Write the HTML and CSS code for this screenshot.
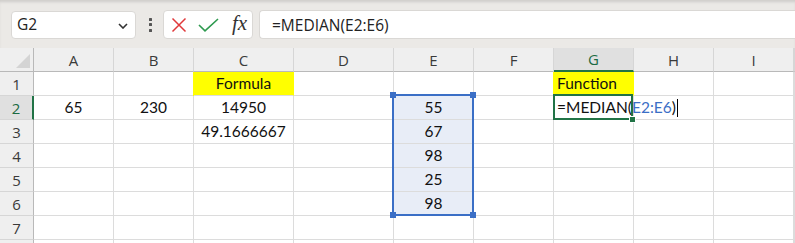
FILE: index.html
```html
<!DOCTYPE html>
<html>
<head>
<meta charset="utf-8">
<link rel="stylesheet" href="styles.css">
</head>
<body>
<div class="app">
  <div class="fbar">
    <div class="namebox">
      <span class="nb-text">G2</span>
      <svg class="chev" width="10" height="6" viewBox="0 0 10 6"><path d="M1 1 L5 5 L9 1" fill="none" stroke="#333" stroke-width="1.6"/></svg>
    </div>
    <div class="dots"><i></i><i></i><i></i></div>
    <div class="actions">
      <svg class="ic-x" width="16" height="16" viewBox="0 0 16 16"><path d="M1.5 1.5 L14.5 14.5 M14.5 1.5 L1.5 14.5" stroke="#e0393b" stroke-width="1.5" fill="none"/></svg>
      <svg class="ic-ok" width="21" height="14" viewBox="0 0 21 14"><path d="M1 7 L7 12.8 L20 1" stroke="#2e9a4f" stroke-width="1.6" fill="none"/></svg>
      <span class="fx">fx</span>
    </div>
    <div class="finput">=MEDIAN(E2:E6)</div>
  </div>
  <div class="sheet">
    <div class="corner"><svg width="16" height="16" viewBox="0 0 16 16"><path d="M15 1 L15 15 L1 15 Z" fill="#d4d4d4"/></svg></div>
    <div class="h">A</div><div class="h">B</div><div class="h">C</div><div class="h">D</div><div class="h">E</div><div class="h">F</div><div class="h sel">G</div><div class="h">H</div><div class="h">I</div><div class="h"></div>

    <div class="r">1</div>
    <div class="c"></div><div class="c"></div><div class="c y">Formula</div><div class="c"></div><div class="c"></div><div class="c"></div><div class="c y l">Function</div><div class="c"></div><div class="c"></div><div class="c"></div>

    <div class="r sel">2</div>
    <div class="c">65</div><div class="c">230</div><div class="c">14950</div><div class="c"></div>
    <div class="c e anchor">55<div class="range"><span class="hd tl"></span><span class="hd tr"></span><span class="hd bl"></span><span class="hd br"></span></div></div>
    <div class="c"></div>
    <div class="c l anchor">=MEDIAN(<span class="ref">E2:E6</span>)<span class="caret"></span><div class="active"><span class="fill"></span></div></div>
    <div class="c"></div><div class="c"></div><div class="c"></div>

    <div class="r">3</div>
    <div class="c"></div><div class="c"></div><div class="c">49.1666667</div><div class="c"></div><div class="c e">67</div><div class="c"></div><div class="c"></div><div class="c"></div><div class="c"></div><div class="c"></div>

    <div class="r">4</div>
    <div class="c"></div><div class="c"></div><div class="c"></div><div class="c"></div><div class="c e">98</div><div class="c"></div><div class="c"></div><div class="c"></div><div class="c"></div><div class="c"></div>

    <div class="r">5</div>
    <div class="c"></div><div class="c"></div><div class="c"></div><div class="c"></div><div class="c e">25</div><div class="c"></div><div class="c"></div><div class="c"></div><div class="c"></div><div class="c"></div>

    <div class="r">6</div>
    <div class="c"></div><div class="c"></div><div class="c"></div><div class="c"></div><div class="c e">98</div><div class="c"></div><div class="c"></div><div class="c"></div><div class="c"></div><div class="c"></div>

    <div class="r">7</div>
    <div class="c"></div><div class="c"></div><div class="c"></div><div class="c"></div><div class="c"></div><div class="c"></div><div class="c"></div><div class="c"></div><div class="c"></div><div class="c"></div>

    <div class="r"></div>
    <div class="c"></div><div class="c"></div><div class="c"></div><div class="c"></div><div class="c"></div><div class="c"></div><div class="c"></div><div class="c"></div><div class="c"></div><div class="c"></div>
  </div>
</div>
</body>
</html>
```
FILE: styles.css
```css
* { box-sizing: border-box; }
html, body { margin: 0; padding: 0; }
body { width: 795px; height: 243px; overflow: hidden; background: #fff; }
.app { width: 795px; height: 243px; overflow: hidden; }

.fbar {
  height: 48px;
  display: flex;
  align-items: flex-start;
  padding-top: 10px;
  background: #ebe9e6;
  box-shadow: inset 0 3px 3px -1px rgba(0,0,0,0.12);
  font-family: "Open Sans", "Noto Sans", sans-serif;
  font-size: 15.5px;
  color: #222;
}
.namebox {
  margin-left: 11px;
  margin-top: 1px;
  width: 125px;
  height: 28px;
  background: #fff;
  border: 1px solid #dad8d5;
  border-radius: 4px;
  display: flex;
  align-items: center;
  justify-content: space-between;
  padding: 0 7px 0 5px;
}
.nb-text { line-height: 1; }
.chev { display: block; margin-top: 1px; }
.dots {
  width: 27px;
  height: 29px;
  display: flex;
  flex-direction: column;
  align-items: center;
  justify-content: center;
  gap: 2.5px;
  padding-left: 1px;
}
.dots i { display: block; width: 3px; height: 3px; background: #555; border-radius: 0.5px; }
.actions {
  width: 90px;
  height: 29px;
  background: #fff;
  border: 1px solid #dad8d5;
  border-radius: 4px;
  display: flex;
  align-items: center;
  padding-left: 7px;
}
.ic-x { display: block; }
.ic-ok { display: block; margin-left: 11px; }
.fx {
  margin-left: 13px;
  font-family: "Liberation Serif", serif;
  font-style: italic;
  font-size: 21px;
  color: #333;
  line-height: 1;
  margin-top: -2px;
}
.finput {
  flex: 1;
  margin-left: 6px;
  height: 29px;
  background: #fff;
  border: 1px solid #dad8d5;
  border-right: none;
  border-radius: 4px 0 0 4px;
  padding-left: 12px;
  display: flex;
  align-items: center;
}

.sheet {
  display: grid;
  grid-template-columns: 34px 80px 80px 100px 100px 80px 80px 80px 80px 80px 1fr;
  grid-auto-rows: 24px;
  font-family: "Lato", "Liberation Sans", sans-serif;
  font-size: 15.5px;
  color: #111;
}
.corner {
  background: #efefef;
  border-right: 1px solid #b9b9b9;
  border-bottom: 1px solid #b9b9b9;
  display: flex;
  align-items: flex-end;
  justify-content: flex-end;
  padding: 0 2px 2px 0;
}
.corner svg { display: block; }
.h, .r {
  background: #efefef;
  font-family: "Open Sans", "Noto Sans", sans-serif;
  font-size: 15px;
  color: #3a3a3a;
  display: flex;
  align-items: center;
  justify-content: center;
}
.h {
  border-right: 1px solid #d6d6d6;
  border-bottom: 1px solid #b9b9b9;
}
.r {
  border-right: 1px solid #b9b9b9;
  border-bottom: 1px solid #d6d6d6;
}
.h.sel {
  background: #e0e0e0;
  color: #1b6b43;
  border-bottom: 2px solid #217346;
}
.r.sel {
  background: #e0e0e0;
  color: #1b6b43;
  border-right: 2px solid #217346;
}

.c {
  border-right: 1px solid #dcdcdc;
  border-bottom: 1px solid #dcdcdc;
  line-height: 23px;
  text-align: center;
  white-space: nowrap;
}
.c.l { text-align: left; padding-left: 3px; }
.c.y {
  background: #ffff00;
  border-right-color: #ffff00;
  box-shadow: -1px 0 0 #ffff00;
}
.c.e { background: #e8edf7; }
.anchor { position: relative; }

.range {
  position: absolute;
  left: -2px;
  top: -2px;
  width: 82px;
  height: 122px;
  border: 2px solid #3b6fc6;
}
.hd {
  position: absolute;
  width: 6px;
  height: 6px;
  background: #3b6fc6;
}
.hd.tl { left: -4px; top: -4px; }
.hd.tr { right: -4px; top: -4px; }
.hd.bl { left: -4px; bottom: -4px; }
.hd.br { right: -4px; bottom: -4px; }

.ref { color: #3b6fc6; }
.caret {
  display: inline-block;
  width: 1px;
  height: 18px;
  background: #000;
  vertical-align: -4px;
  margin-left: 1px;
}
.active {
  position: absolute;
  left: -1px;
  top: -2px;
  width: 80px;
  height: 26px;
  border: 2px solid #217346;
}
.fill {
  position: absolute;
  right: -5px;
  bottom: -5px;
  width: 7px;
  height: 7px;
  background: #217346;
  border: 1px solid #fff;
}
```
